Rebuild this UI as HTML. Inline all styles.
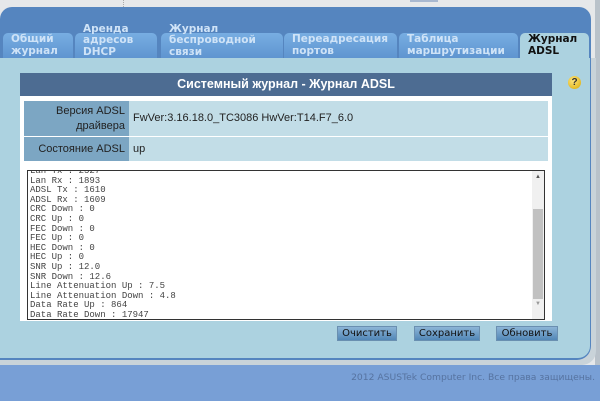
<!DOCTYPE html>
<html><head><meta charset="utf-8"><style>
*{margin:0;padding:0;box-sizing:border-box}
body{width:600px;height:401px;overflow:hidden;background:#e6e8ea;font-family:"Liberation Sans","DejaVu Sans",sans-serif;position:relative}
.abs{position:absolute}
.panel{left:0;top:7px;width:591px;height:353px;background:#5585bf;border-radius:12px 12px 14px 0}
.outer{left:0;top:58px;width:596px;height:307px;background:#c9d3d9;border-radius:0 0 14px 0}
.content{left:0;top:58px;width:590px;height:300px;background:#acd2e0;border-radius:0 0 12px 0}
.tab{top:33px;height:25px;background:linear-gradient(#78aee2,#5f95d0);border-radius:5px 5px 0 0;color:#cfe3f7;font-family:"DejaVu Sans",sans-serif;font-weight:bold;font-size:10.5px;line-height:11.5px;padding:0 0 0 8px;overflow:visible}
.tab span{position:absolute;left:8px;bottom:1px}
.bottom{left:0;top:365px;width:600px;height:36px;background:#789fd6}
.foot{right:5px;top:372px;font-family:"DejaVu Sans",sans-serif;font-size:9.2px;color:#5673a0}
.box{left:20px;top:73px;width:532px;height:248px;background:#fff}
.hdr{left:20px;top:73px;width:532px;height:23px;background:#4d6c92;color:#fff;font-weight:bold;font-size:12.5px;text-align:center;line-height:23px}
.lab{background:#7ca6c3;color:#222;font-size:11px;text-align:right;padding-right:4px}
.val{background:#c2dde7;color:#222;font-size:11px;padding-left:4px}
.ta{left:27px;top:170px;width:518px;height:150px;border:1px solid #333;background:#fff;overflow:hidden}
.ta pre{font-family:"Liberation Mono",monospace;font-size:9px;line-height:9.6px;color:#444;margin:-4px 0 0 2px}
.btn{top:326px;height:15px;background:linear-gradient(#8cb4d6,#5287b7);border:1px solid #6a8fb0;font-family:"DejaVu Sans",sans-serif;font-size:10px;color:#111;text-align:center;line-height:13px}
</style></head><body>
<div class="abs" style="left:123px;top:0;width:1px;height:7px;border-left:1px dotted #aaa"></div>
<div class="abs" style="left:410px;top:0;width:28px;height:2px;background:#a8b8d0"></div>
<div class="abs" style="left:595px;top:0;width:5px;height:365px;background:#b9c2ca"></div>
<div class="abs outer"></div>
<div class="abs panel"></div>
<div class="abs content"></div>
<div class="abs tab" style="left:3px;width:70px"><span>Общий<br>журнал</span></div>
<div class="abs tab" style="left:75px;width:82px"><span style="bottom:0">Аренда<br>адресов<br>DHCP</span></div>
<div class="abs tab" style="left:161px;width:122px"><span style="bottom:0">Журнал<br>беспроводной<br>связи</span></div>
<div class="abs tab" style="left:284px;width:113px"><span>Переадресация<br>портов</span></div>
<div class="abs tab" style="left:399px;width:119px"><span>Таблица<br>маршрутизации</span></div>
<div class="abs tab" style="left:520px;width:69px;background:#acd2e0;color:#111"><span>Журнал<br>ADSL</span></div>
<div class="abs box"></div>
<div class="abs hdr">Системный журнал - Журнал ADSL</div>
<div class="abs lab" style="left:24px;top:101px;width:105px;height:35px;line-height:15px;padding-top:3px">Версия ADSL<br>драйвера</div>
<div class="abs val" style="left:129px;top:101px;width:419px;height:35px;line-height:35px">FwVer:3.16.18.0_TC3086 HwVer:T14.F7_6.0</div>
<div class="abs lab" style="left:24px;top:137px;width:105px;height:24px;line-height:24px">Состояние ADSL</div>
<div class="abs val" style="left:129px;top:137px;width:419px;height:24px;line-height:24px">up</div>
<div class="abs ta"><pre>Lan Tx : 2527
Lan Rx : 1893
ADSL Tx : 1610
ADSL Rx : 1609
CRC Down : 0
CRC Up : 0
FEC Down : 0
FEC Up : 0
HEC Down : 0
HEC Up : 0
SNR Up : 12.0
SNR Down : 12.6
Line Attenuation Up : 7.5
Line Attenuation Down : 4.8
Data Rate Up : 864
Data Rate Down : 17947</pre>
<div class="abs" style="right:0;top:0;width:12px;height:148px;background:#f0f0f0"></div>
<div class="abs" style="right:1px;top:38px;width:10px;height:90px;background:#c1c1c1"></div>
<div class="abs" style="right:3px;top:3px;font-size:6px;color:#555">▲</div>
<div class="abs" style="right:3px;top:130px;font-size:6px;color:#999">▼</div>
</div>
<div class="abs btn" style="left:337px;width:60px">Очистить</div>
<div class="abs btn" style="left:414px;width:66px">Сохранить</div>
<div class="abs btn" style="left:496px;width:62px">Обновить</div>
<div class="abs" style="left:568px;top:76px;width:13px;height:13px;border-radius:50%;background:radial-gradient(circle at 40% 35%,#ffe680,#d8a800);color:#333;font-weight:bold;font-size:10px;text-align:center;line-height:13px">?</div>
<div class="abs bottom"></div>
<div class="abs foot">2012 ASUSTek Computer Inc. Все права защищены.</div>
</body></html>
